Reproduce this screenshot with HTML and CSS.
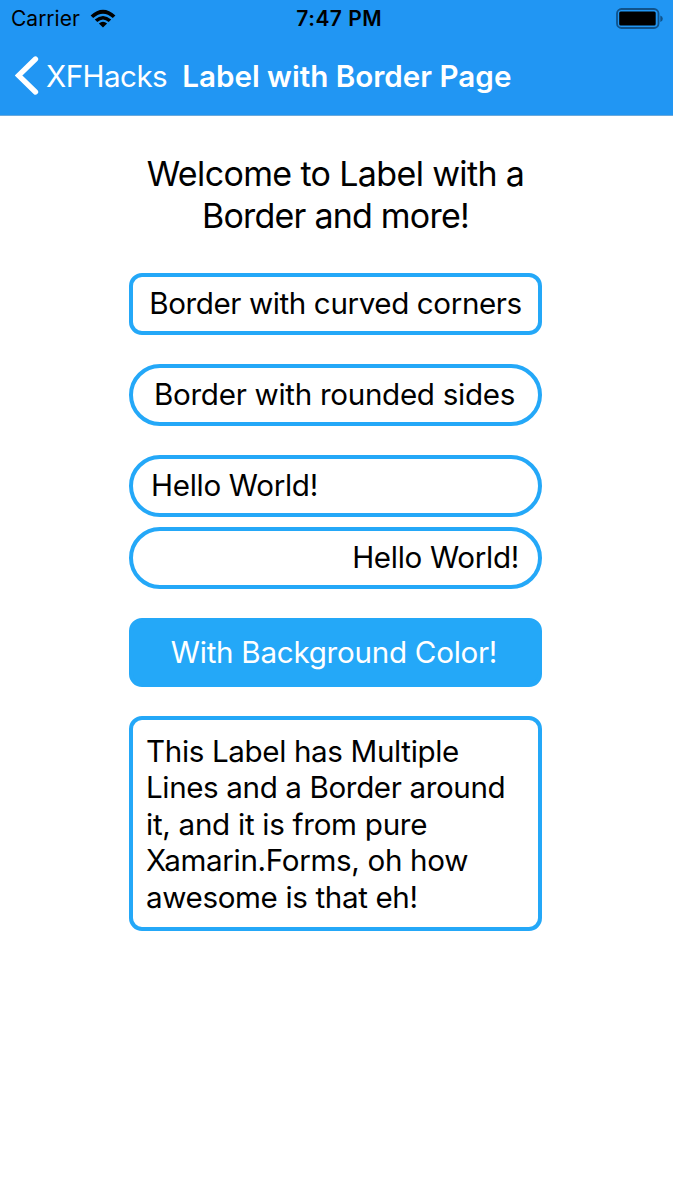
FILE: index.html
```html
<!DOCTYPE html>
<html lang="en">
<head>
<meta charset="utf-8">
<title>Label with Border Page</title>
<link rel="stylesheet" href="styles.css">
</head>
<body>
<header class="header">
  <div class="status">
    <div class="network"><span class="carrier">Carrier</span>
      <svg class="wifi" width="26" height="19" viewBox="0 0 26 19"><path d="M.6 6.400Q13-5 25.400 6.400L22.800 9.100Q13 .2 3.200 9.100ZM4.800 10.500Q13 3.300 21.200 10.500L18.700 13.100Q13 8 7.300 13.100ZM8.900 14.500Q13 11 17.100 14.500L13 18.500Z"/></svg>
    </div>
    <span class="time">7:47 PM</span>
    <svg class="battery" width="48" height="22" viewBox="0 0 48 22"><rect x="1" y="1" width="41.500" height="19" rx="4.500" fill="none" stroke="#10528a" stroke-width="1.800"/><rect x="3.200" y="3.500" width="36.500" height="14" rx="1.500"/><path d="M44.300 7.500Q46.800 8.500 46.800 10.800T44.300 14Z" fill="#10528a"/></svg>
  </div>
  <nav class="nav">
    <svg class="chevron" width="24" height="40" viewBox="0 0 24 40"><path d="M20.500 3L3.500 19.500L20.500 36" fill="none" stroke="#fff" stroke-width="5.300" stroke-linecap="round"/></svg>
    <span class="back">XFHacks</span>
    <h1 class="title">Label with Border Page</h1>
  </nav>
</header>
<main class="content">
  <p class="welcome"><span class="w1">Welcome to Label with a</span><br><span class="w2">Border and more!</span></p>
  <div class="label curved"><span class="t1">Border with curved corners</span></div>
  <div class="label pill"><span class="t2">Border with rounded sides</span></div>
  <div class="label pill start tight"><span class="t3">Hello World!</span></div>
  <div class="label pill end"><span class="t3">Hello World!</span></div>
  <div class="label filled"><span class="t4">With Background Color!</span></div>
  <p class="label multi"><span class="m1">This Label has Multiple</span><br><span class="m2">Lines and a Border around</span><br><span class="m3">it, and it is from pure</span><br><span class="m4">Xamarin.Forms, oh how</span><br><span class="m5">awesome is that eh!</span></p>
</main>
</body>
</html>
```
FILE: styles.css
```css
* { box-sizing: border-box; }
body { margin: 0; background: #fff; color: #000; font-family: Inter, "Liberation Sans", sans-serif; font-size: 29.6px; }
svg { display: block; flex: none; }
.header { height: 115.5px; background: #2196f3; border-bottom: 1px solid #6aa9dc; }
.status { display: grid; grid-template-columns: 1fr auto 1fr; height: 37px; padding: 0 9.5px 0 11px; align-items: center; font-size: 21px; }
.network { display: flex; align-items: center; gap: 11px; }
.wifi { margin-left: -1px; }
.time { font-weight: 600; letter-spacing: .5px; margin-left: 4px; }
.battery { justify-self: end; }
.nav { display: flex; align-items: center; height: 78px; padding-left: 15px; color: #fff; white-space: nowrap; }
.back { margin: 0 0 1px 7px; letter-spacing: -.55px; }
.title { margin: 0 0 1px 15px; font-size: 29.6px; font-weight: 600; }
.content { width: 413px; margin: 0 0 0 129px; padding-top: 37px; white-space: nowrap; }
.welcome { margin: 0 0 36.5px; text-align: center; font-size: 34px; line-height: 42px; }
.w1 { letter-spacing: -.64px; }
.w2 { letter-spacing: -.78px; }
.label { display: flex; align-items: center; justify-content: center; height: 62px; margin: 0 0 29px; padding-bottom: 2px; border: 4px solid #24a8f8; }
.curved { border-radius: 13px; }
.pill { border-radius: 31px; }
.start { justify-content: flex-start; padding-left: 18px; }
.end { justify-content: flex-end; padding-right: 19px; }
.tight { margin-bottom: 10px; }
.filled { height: 69px; border-radius: 13px; background: #24a8f8; color: #fff; }
.t1 { letter-spacing: -.4px; }
.t2 { letter-spacing: -.3px; margin-right: 2px; }
.t3 { letter-spacing: -.3px; }
.t4 { letter-spacing: -.27px; margin-right: 3px; }
.multi { display: block; height: 214.5px; margin: 0; padding: 13px 13px 0; border-radius: 13px; line-height: 36.4px; }
.m1 { letter-spacing: -.36px; }
.m2 { letter-spacing: -.38px; }
.m3 { letter-spacing: -.28px; }
.m4 { letter-spacing: -.33px; }
.m5 { letter-spacing: -.37px; }
```
